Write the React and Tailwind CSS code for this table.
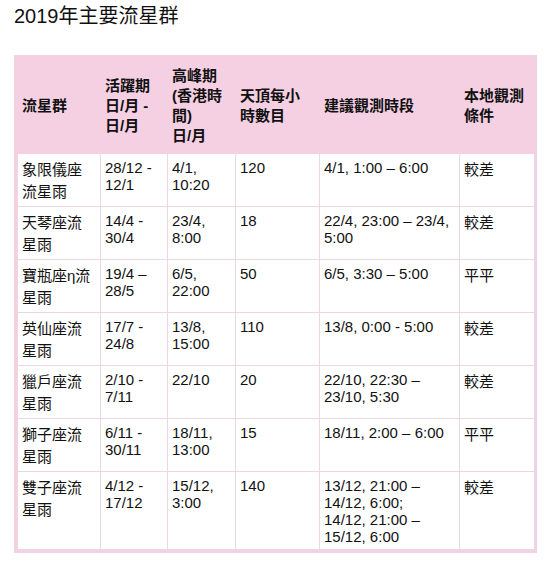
import React from "react";

const rows = [
    ["象限儀座流星雨", "28/12 - 12/1", "4/1, 10:20", "120", "4/1, 1:00 – 6:00", "較差"],
    ["天琴座流星雨", "14/4 - 30/4", "23/4, 8:00", "18", "22/4, 23:00 – 23/4, 5:00", "較差"],
    ["寶瓶座η流星雨", "19/4 – 28/5", "6/5, 22:00", "50", "6/5, 3:30 – 5:00", "平平"],
    ["英仙座流星雨", "17/7 - 24/8", "13/8, 15:00", "110", "13/8, 0:00 - 5:00", "較差"],
    ["獵戶座流星雨", "2/10 - 7/11", "22/10", "20", "22/10, 22:30 – 23/10, 5:30", "較差"],
    ["獅子座流星雨", "6/11 - 30/11", "18/11, 13:00", "15", "18/11, 2:00 – 6:00", "平平"],
    [
        "雙子座流星雨",
        "4/12 - 17/12",
        "15/12, 3:00",
        "140",
        <>
            13/12, 21:00 – 14/12, 6:00;
            <br />
            14/12, 21:00 – 15/12, 6:00
        </>,
        "較差",
    ],
];

const th = "text-left align-middle font-bold leading-[20px] pl-[4px] pr-[6px] py-[7px] border border-[#f5d0e3]";
// chinese columns get a taller line than the numeric ones
const tdCjk = "align-top leading-[21.5px] pl-[4px] pr-[6px] pt-[5px] pb-[4px] border border-[#ecd7e2]";
const tdNum = "align-top leading-[17px] pl-[4px] pr-[6px] pt-[5px] pb-[4px] border border-[#ecd7e2]";

export default function App() {
    return (
        <div
            className="bg-white text-[#111] px-[14px] pt-[1px] pb-4 w-[550px]"
            style={{ fontFamily: '"Liberation Sans", "Noto Sans CJK TC", sans-serif' }}
        >
            <h2 className="text-[20px] leading-normal mb-[24px]">2019年主要流星群</h2>

            <div className="w-[523px] border-[3px] border-[#f5d0e3]">
                <table className="w-full table-fixed border-collapse text-[15px]">
                    <colgroup>
                        <col className="w-[83px]" />
                        <col className="w-[67px]" />
                        <col className="w-[68px]" />
                        <col className="w-[84px]" />
                        <col className="w-[140px]" />
                        <col className="w-[75px]" />
                    </colgroup>
                    <thead>
                        <tr className="bg-[#f5d0e3]">
                            <th className={th}>流星群</th>
                            <th className={th}>
                                活躍期
                                <br />
                                日/月 -
                                <br />
                                日/月
                            </th>
                            <th className={th}>
                                高峰期
                                <br />
                                (香港時間)
                                <br />
                                日/月
                            </th>
                            <th className={th}>天頂每小時數目</th>
                            <th className={th}>建議觀測時段</th>
                            <th className={th}>本地觀測條件</th>
                        </tr>
                    </thead>
                    <tbody>
                        {rows.map((row, i) => (
                            <tr key={i} className="bg-white">
                                {row.map((cell, j) => (
                                    <td key={j} className={j === 0 || j === 5 ? tdCjk : tdNum}>
                                        {cell}
                                    </td>
                                ))}
                            </tr>
                        ))}
                    </tbody>
                </table>
            </div>
        </div>
    );
}
